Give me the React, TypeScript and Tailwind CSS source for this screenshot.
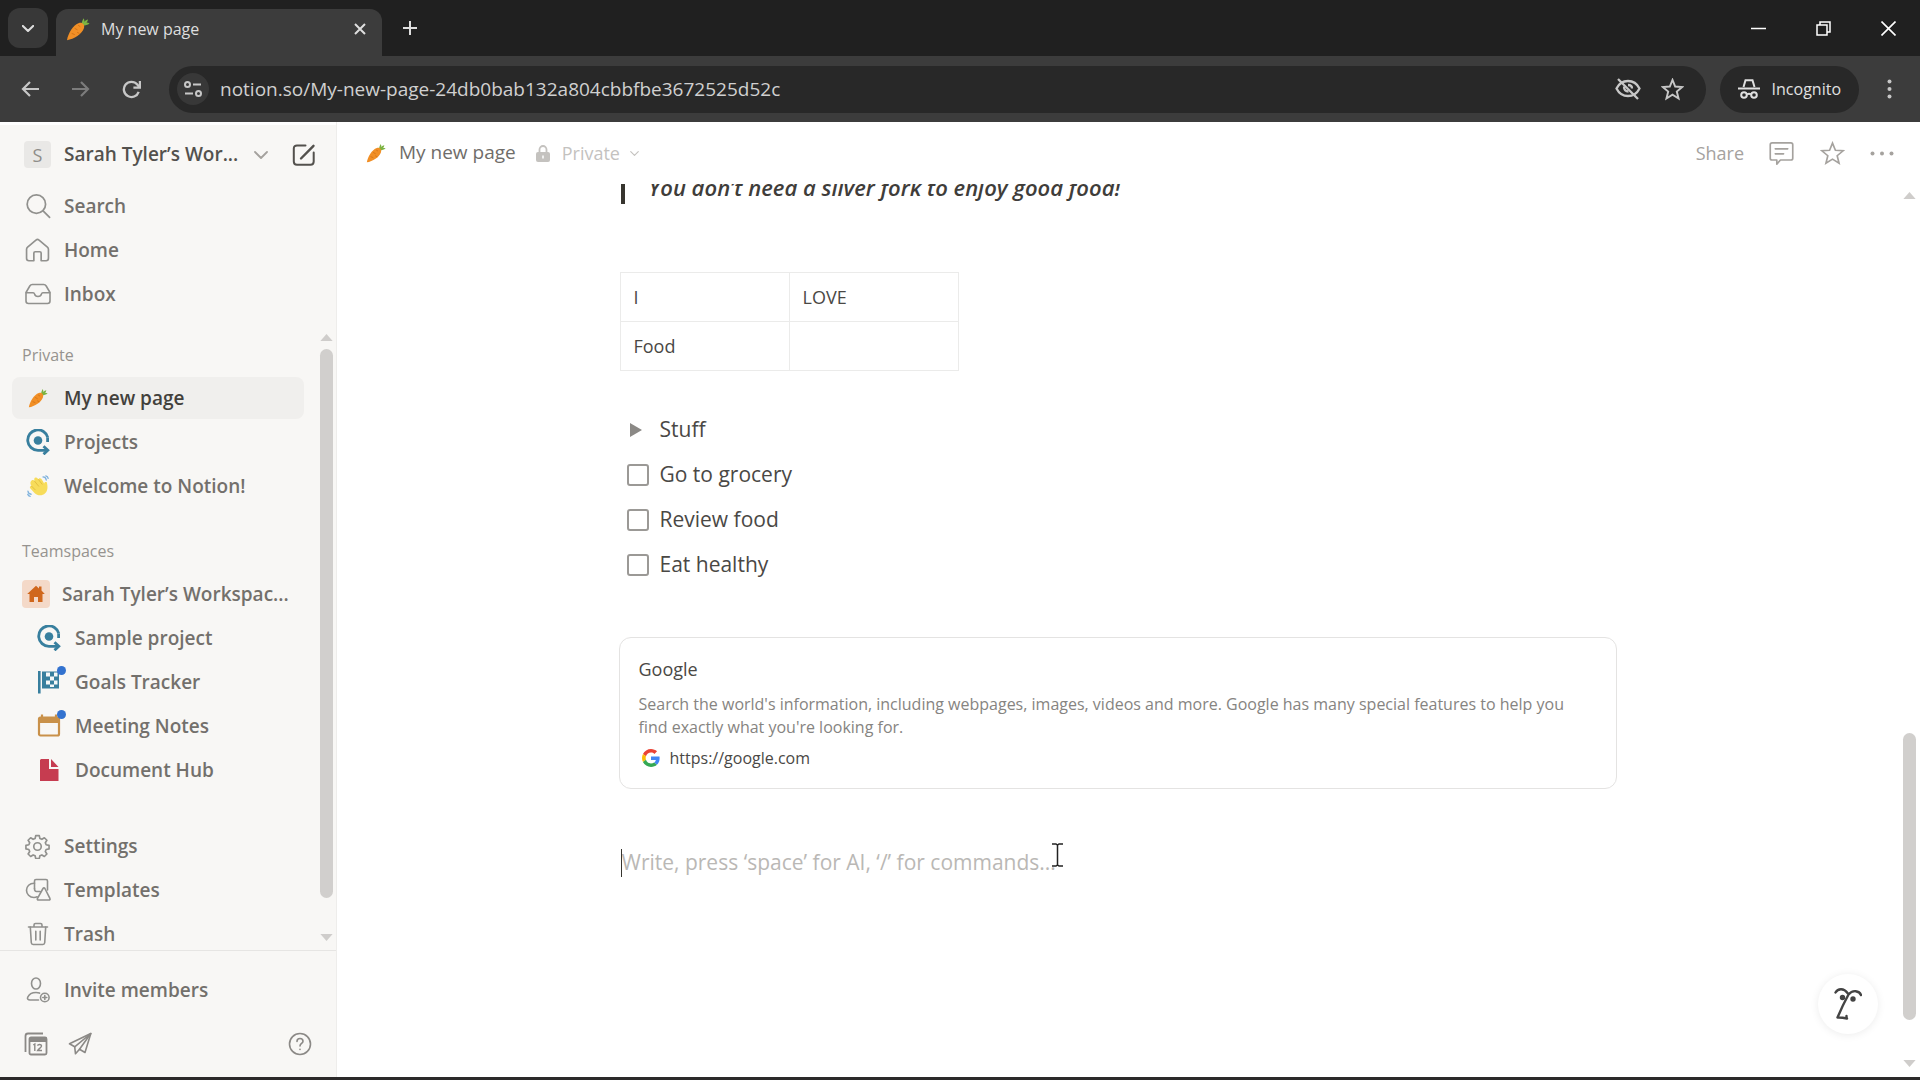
import { useState } from 'react';
import type { ReactNode } from 'react';

interface IconProps {
  className?: string;
}

interface NavItem {
  label: string;
  icon: ReactNode;
  unread?: boolean;
  active?: boolean;
}

/* ---------- Icons ---------- */

function CarrotIcon({ className = 'size-5' }: IconProps) {
  return (
    <svg viewBox="0 0 24 24" className={className} aria-hidden="true">
      <path d="M15.5 8.5c.2-2.8.6-5 2.2-7.3.6 1.3.8 2.300.7 3.500C19.500 3.500 20.600 2.900 22 2.600c-.2 1.300-.7 2.200-1.500 3 1.100 0 2.100.2 3.100.9-2 1.400-4.200 1.900-6.800 2.500z" fill="#7cb342" />
      <path d="M1 23.200C2.200 16.500 7 8 13 6c3.400-1.100 6 1.700 5 5C16.200 17 8 22 1 23.200z" fill="#f18f26" />
      <path d="M9 11.500l2.200 1.200M12.500 8.500l1.500 1M6 16.500l2.400 1M11.500 15.500l1.600.8" stroke="#d06f14" strokeWidth="0.9" fill="none" strokeLinecap="round" />
    </svg>
  );
}

function TargetIcon() {
  return (
    <svg viewBox="0 0 24 26" className="h-[26px] w-6" fill="none" stroke="#387f9e" strokeWidth="2.8" aria-hidden="true">
      <path d="M21.800 8.500A10.200 10.200 0 1 0 12 21.300h8" />
      <path d="M17.500 17.200l4.300 4.100-4.300 4" />
      <path d="M21.600 8.500v4.500" />
      <circle cx="12" cy="11.500" r="4.300" fill="#387f9e" stroke="none" />
    </svg>
  );
}

function WaveIcon() {
  return (
    <svg viewBox="0 0 24 24" className="size-[22px]" fill="none" aria-hidden="true">
      <path d="M5 6c1.500-1 2.500-.3 3.200.7C7.500 4.500 8 3 9.500 2.800c1.500-.2 2.200 1 3 2.200.3-1.500 1.800-2 3-.9 1.500 1.600 2 3.400 3.300 5.100.4-1.300 1.700-1.900 2.900-1 .9 4.200 1.300 8.600-1.900 11.800-3.400 3.300-8.600 2.700-11.600-.5L3.500 14.500c-1-1.300.2-2.900 1.500-2.300C3.500 10 3 7.500 5 6z" fill="#f7dc5a" />
      <path d="M8.200 6.700l4.500 5.500M12.500 5l4 5M5 12.200l4 4" stroke="#dfb93a" strokeWidth="0.900" strokeLinecap="round" />
      <path d="M17.500 2c2 .2 3.300 1.600 3.500 3.500M20.500 1c1.400.4 2.300 1.300 2.600 2.700M1 17.500c.2 2 1.600 3.300 3.500 3.500M.8 21c.4 1.300 1.400 2 2.700 2.200" stroke="#7fb2dd" strokeWidth="1.400" strokeLinecap="round" />
    </svg>
  );
}

function FlagIcon() {
  return (
    <svg viewBox="0 0 24 24" className="size-6" aria-hidden="true">
      <path d="M1 1h2.600v22.500H1z" fill="#387f9e" />
      <path d="M5 1.500h17v17H5z" fill="#387f9e" />
      <path d="M9 2.500h4v4H9zM13 6.500h4v4h-4zM9 10.500h4v4H9zM17 10.500h3.500v4H17zM13 14.500h4V17h-4zM17 2.500h3.500v4H17z" fill="#f5f8f8" />
    </svg>
  );
}

function MeetingIcon() {
  return (
    <svg viewBox="0 0 24 24" className="size-6" fill="none" aria-hidden="true">
      <path d="M5 .5v4M19 .5v4" stroke="#c9914a" strokeWidth="2.200" />
      <rect x="2" y="3.500" width="20" height="18" rx="1.500" stroke="#c9914a" strokeWidth="2.200" />
      <path d="M2 3h20v6H2z" fill="#c9914a" />
    </svg>
  );
}

function DocumentIcon() {
  return (
    <svg viewBox="0 0 24 24" className="size-6" fill="#c63c50" aria-hidden="true">
      <path d="M4 1h8v10h9.500v12H3V2z" />
      <path d="M14 1l7.500 8H14z" />
    </svg>
  );
}

const stroke = {
  fill: 'none',
  stroke: 'currentColor',
  strokeWidth: 1.6,
  strokeLinecap: 'round' as const,
  strokeLinejoin: 'round' as const,
  'aria-hidden': true,
};

function SearchIcon() {
  return (
    <svg viewBox="0 0 24 24" className="size-[26px]" {...stroke}>
      <circle cx="10.500" cy="10.300" r="8.500" />
      <path d="M16.700 16.500l6 6" />
    </svg>
  );
}

function HomeIcon() {
  return (
    <svg viewBox="0 0 24 24" className="size-[25px]" {...stroke}>
      <path d="M1.500 10.800c0-.9.300-1.500 1-2.100l8-6.700c.9-.7 2.100-.7 3 0l8 6.700c.7.6 1 1.200 1 2.100v8.700c0 1.500-.8 2.300-2.300 2.300h-4.700v-7.300c0-.8-.5-1.300-1.300-1.300h-4.400c-.8 0-1.300.5-1.300 1.300v7.300H3.800c-1.500 0-2.300-.8-2.300-2.300z" />
    </svg>
  );
}

function InboxIcon() {
  return (
    <svg viewBox="0 0 26 22" className="h-[22px] w-[26px]" {...stroke}>
      <path d="M1 9.500L4.800 3c.6-1 1.300-1.500 2.500-1.500h11.400c1.200 0 1.900.5 2.500 1.500L25 9.500V18c0 1.600-.9 2.500-2.500 2.500h-19C1.900 20.500 1 19.600 1 18z" />
      <path d="M1.300 9.800h6.900c.8 0 1.100.4 1.300 1.100.4 1.600 1.600 2.600 3.500 2.600s3.100-1 3.500-2.600c.2-.7.5-1.100 1.300-1.100h6.900" />
    </svg>
  );
}

function GearIcon() {
  return (
    <svg viewBox="0 0 24 24" className="size-[25px]" {...stroke}>
      <circle cx="12" cy="12" r="3.600" />
      <path d="M10.300 1.500h3.400l.6 2.800 1.900.8 2.400-1.500 2.400 2.400-1.500 2.400.8 1.900 2.800.6v3.400l-2.800.6-.8 1.900 1.500 2.400-2.400 2.400-2.400-1.500-1.900.8-.6 2.800h-3.400l-.6-2.800-1.900-.8-2.400 1.500L3 19.200l1.500-2.400-.8-1.900-2.800-.6v-3.400l2.800-.6.8-1.900L3 6l2.400-2.400 2.400 1.500 1.900-.8z" />
    </svg>
  );
}

function TemplatesIcon() {
  return (
    <svg viewBox="0 0 26 24" className="h-6 w-[26px]" {...stroke}>
      <path d="M9.500 10.500V3c0-.9.600-1.500 1.500-1.500h10c.9 0 1.500.6 1.500 1.500v9" />
      <path d="M9.500 5.200C4.500 5 1.500 8.500 1.500 12.200s3 7.300 7.500 7.300c1.200 0 2.200-.2 3.200-.7" />
      <path d="M18 10.500c.5-.9 1.400-.9 1.900 0l5 9.800c.5.900 0 1.700-1 1.700H13.500c-1 0-1.500-.8-1-1.700zM9.500 10.500c0 2 .5 3 2 3h3.500" />
    </svg>
  );
}

function TrashIcon() {
  return (
    <svg viewBox="0 0 22 24" className="h-6 w-[22px]" {...stroke}>
      <path d="M1.500 5h19M7 5V3c0-1 .6-1.500 1.500-1.500h5c.9 0 1.500.5 1.500 1.500v2" />
      <path d="M3.300 5l1 15.800c.1 1.200.8 1.700 1.800 1.700h9.800c1 0 1.700-.5 1.800-1.700l1-15.800M8.800 9.300v8.700M13.200 9.300v8.700" />
    </svg>
  );
}

function InviteIcon() {
  return (
    <svg viewBox="0 0 24 26" className="h-[26px] w-6" {...stroke}>
      <ellipse cx="10" cy="6.500" rx="4.500" ry="5.500" />
      <path d="M12.500 23H4c-2 0-3-1-2.300-2.700C3 17.300 6 15.500 10 15.500c1.500 0 2.500.2 3.500.6" />
      <circle cx="18.800" cy="20.500" r="4.300" />
      <path d="M18.800 18.500v4M16.800 20.500h4" />
    </svg>
  );
}

function CalendarStackIcon() {
  return (
    <svg viewBox="0 0 24 24" className="size-6" fill="none" stroke="currentColor" strokeWidth="1.800" aria-hidden="true">
      <path d="M1.500 20V4c0-1.700.8-2.500 2.500-2.500h15" />
      <rect x="5.500" y="5.500" width="17" height="17" rx="1.500" />
      <path d="M5.500 8h17" strokeWidth="4" />
      <path d="M9.300 13l1.500-1v7M13.500 13.700c.3-1.400 4-1.900 4 .4 0 1.600-2.800 2.500-3.900 4.400h4.400" strokeWidth="1.400" />
    </svg>
  );
}

function PlaneIcon() {
  return (
    <svg viewBox="0 0 24 24" className="size-6" {...stroke}>
      <path d="M22.800 1.500L1.500 11.800l5.200 3 .8 7 4-4.500 5.500 3.200z" />
      <path d="M6.700 14.800L22.800 1.500 11.500 17.300" />
    </svg>
  );
}

function ComposeIcon() {
  return (
    <svg viewBox="0 0 24 24" className="size-6" {...stroke} strokeWidth={2}>
      <path d="M13.500 2.500H5C3 2.500 1.800 3.700 1.800 5.500v13c0 2 1.200 3.200 3.200 3.200h13.500c2 0 3.200-1.200 3.200-3.200v-9" />
      <path d="M9 15.500L21.500 2.800" strokeWidth={2.400} />
    </svg>
  );
}

function StarIcon({ className }: IconProps) {
  return (
    <svg viewBox="0 0 24 24" className={className} {...stroke} strokeLinejoin="miter">
      <path d="M12 2l2.800 6.900 7.400.5-5.700 4.700 1.800 7.300L12 17.400l-6.300 4 1.800-7.300L1.800 9.400l7.400-.5z" />
    </svg>
  );
}

function CommentIcon() {
  return (
    <svg viewBox="0 0 24 24" className="size-[25px]" {...stroke}>
      <path d="M3 1.800h18c1 0 1.800.7 1.800 1.700v13c0 1-.8 1.700-1.800 1.700H11l-3.500 4v-4H3c-1 0-1.800-.7-1.800-1.700v-13C1.200 2.500 2 1.800 3 1.800zM6 7.500h12M6 12.300h8" />
    </svg>
  );
}

function Chevron({ className }: IconProps) {
  return (
    <svg viewBox="0 0 14 8" className={className} {...stroke} strokeWidth={1.800}>
      <path d="M1 1l6 6 6-6" />
    </svg>
  );
}

function GoogleIcon() {
  return (
    <svg viewBox="0 0 48 48" className="size-[18px]" aria-hidden="true">
      <path fill="#ea4335" d="M24 9.500c3.540 0 6.710 1.220 9.210 3.600l6.850-6.850C35.900 2.380 30.470 0 24 0 14.620 0 6.510 5.380 2.560 13.220l7.980 6.190C12.430 13.720 17.740 9.500 24 9.500z" />
      <path fill="#4285f4" d="M46.980 24.550c0-1.570-.15-3.090-.38-4.550H24v9.020h12.940c-.58 2.960-2.260 5.480-4.780 7.180l7.730 6c4.510-4.180 7.090-10.360 7.090-17.650z" />
      <path fill="#fbbc05" d="M10.530 28.590c-.48-1.450-.76-2.990-.76-4.590s.27-3.140.76-4.590l-7.980-6.190C.92 16.460 0 20.120 0 24c0 3.880.92 7.540 2.560 10.780z" />
      <path fill="#34a853" d="M24 48c6.480 0 11.930-2.130 15.890-5.810l-7.730-6c-2.150 1.450-4.920 2.300-8.160 2.300-6.260 0-11.570-4.220-13.470-9.910l-7.980 6.190C6.510 42.620 14.620 48 24 48z" />
    </svg>
  );
}

function Triangle({ className }: IconProps) {
  return (
    <svg viewBox="0 0 14 8" className={className} fill="#cfcdcb" aria-hidden="true">
      <path d="M7 0l7 8H0z" />
    </svg>
  );
}

/* ---------- Data ---------- */

const mainNav: NavItem[] = [
  { label: 'Search', icon: <SearchIcon /> },
  { label: 'Home', icon: <HomeIcon /> },
  { label: 'Inbox', icon: <InboxIcon /> },
];

const privatePages: NavItem[] = [
  { label: 'My new page', icon: <CarrotIcon />, active: true },
  { label: 'Projects', icon: <TargetIcon /> },
  { label: 'Welcome to Notion!', icon: <WaveIcon /> },
];

const teamPages: NavItem[] = [
  { label: 'Sample project', icon: <TargetIcon /> },
  { label: 'Goals Tracker', icon: <FlagIcon />, unread: true },
  { label: 'Meeting Notes', icon: <MeetingIcon />, unread: true },
  { label: 'Document Hub', icon: <DocumentIcon /> },
];

const toolNav: NavItem[] = [
  { label: 'Settings', icon: <GearIcon /> },
  { label: 'Templates', icon: <TemplatesIcon /> },
  { label: 'Trash', icon: <TrashIcon /> },
];

const todos = ['Go to grocery', 'Review food', 'Eat healthy'];

/* ---------- Browser ---------- */

function TabStrip() {
  return (
    <div className="flex h-14 shrink-0 items-end bg-[#202020] pl-2 text-[#dedede]">
      <button aria-label="Search tabs" className="mb-2 flex size-10 items-center justify-center rounded-xl bg-[#383838]">
        <Chevron className="h-[7px] w-3 stroke-[2.4]" />
      </button>
      <div className="ml-2 flex h-[47px] w-[326px] items-center rounded-t-xl bg-[#3c3c3c] pr-4 pb-2 pl-[10px]">
        <CarrotIcon className="size-6" />
        <span className="ml-[11px] flex-1 text-base">My new page</span>
        <button aria-label="Close tab">
          <svg viewBox="0 0 12 12" className="size-3" fill="none" stroke="currentColor" strokeWidth="2">
            <path d="M1 1l10 10M11 1L1 11" />
          </svg>
        </button>
      </div>
      <button aria-label="New tab" className="mb-5 ml-5 flex size-4 items-center justify-center">
        <svg viewBox="0 0 14 14" className="size-[14px]" fill="none" stroke="currentColor" strokeWidth="2">
          <path d="M7 0v14M0 7h14" />
        </svg>
      </button>
      <div className="mr-6 mb-5 ml-auto flex items-center gap-[50px] text-white">
        <button aria-label="Minimize">
          <svg viewBox="0 0 15 15" className="size-[15px]" stroke="currentColor" strokeWidth="1.500"><path d="M0 7.500h15" /></svg>
        </button>
        <button aria-label="Restore">
          <svg viewBox="0 0 15 15" className="size-[15px]" fill="none" stroke="currentColor" strokeWidth="1.500">
            <path d="M1 4h10v10H1zM4 4V1h10v10h-3" />
          </svg>
        </button>
        <button aria-label="Close">
          <svg viewBox="0 0 15 15" className="size-[15px]" stroke="currentColor" strokeWidth="1.600"><path d="M.5.5l14 14M14.500.5l-14 14" /></svg>
        </button>
      </div>
    </div>
  );
}

function Toolbar() {
  return (
    <div className="flex h-[66px] shrink-0 items-center bg-[#3c3c3c] pr-7 pl-[21px] text-[#c7c7c7]">
      <button aria-label="Back">
        <svg viewBox="0 0 18 16" className="h-4 w-[18px]" fill="none" stroke="currentColor" strokeWidth="2.200"><path d="M18 8H2M9 1L2 8l7 7" /></svg>
      </button>
      <button aria-label="Forward" className="ml-[33px] text-[#7c7c7c]">
        <svg viewBox="0 0 18 16" className="h-4 w-[18px]" fill="none" stroke="currentColor" strokeWidth="2.200"><path d="M0 8h16M9 1l7 7-7 7" /></svg>
      </button>
      <button aria-label="Reload" className="ml-8">
        <svg viewBox="0 0 18 18" className="size-[19px]" fill="none" stroke="currentColor" strokeWidth="2.200">
          <path d="M15.800 11.200A7.200 7.200 0 1 1 14.500 4.300l2 2.500" />
          <path d="M17 1v6.200h-6.200" />
        </svg>
      </button>
      <div className="ml-7 flex h-[47px] flex-1 items-center rounded-full bg-[#282828] pr-[22px] pl-2">
        <button aria-label="Site information" className="flex size-8 items-center justify-center rounded-full bg-[#383838]">
          <svg viewBox="0 0 18 16" className="h-4 w-[18px]" fill="none" stroke="currentColor" strokeWidth="2">
            <circle cx="3.500" cy="3.500" r="2.500" />
            <circle cx="14.500" cy="12.500" r="2.500" />
            <path d="M9 3.500h8M1 12.500h8" />
          </svg>
        </button>
        <input
          aria-label="Address"
          readOnly
          defaultValue="notion.so/My-new-page-24db0bab132a804cbbfbe3672525d52c"
          className="ml-[11px] min-w-0 flex-1 bg-transparent text-[19px] text-[#d0d0d0] outline-none"
        />
        <button aria-label="Third-party cookies blocked">
          <svg viewBox="0 0 26 22" className="h-[22px] w-[26px]" fill="none" stroke="currentColor" strokeWidth="2.300">
            <path d="M1.500 10.500C4 5.500 8 3 13 3s9 2.500 11.500 7.500C22 15.500 18 18 13 18S4 15.500 1.500 10.500z" />
            <path d="M9 8.500c0 3 1.500 5 4.500 5M13 7c2.500 0 4 1.500 4 3.500" />
            <path d="M3 1l20 20" />
          </svg>
        </button>
        <button aria-label="Bookmark this tab" className="ml-5">
          <StarIcon className="size-[23px] stroke-2" />
        </button>
      </div>
      <button className="ml-[14px] flex h-[47px] items-center rounded-full bg-[#282828] px-[18px] text-base text-[#e0e0e0]">
        <svg viewBox="0 0 22 20" className="mr-3 h-5 w-[22px]" fill="none" stroke="currentColor" strokeWidth="2" aria-hidden="true">
          <path d="M5.500 8l2-6.800h7l2 6.800M0 9.500h22M9 15.300c1.300-.8 2.700-.8 4 0" />
          <circle cx="6" cy="16" r="2.800" />
          <circle cx="16" cy="16" r="2.800" />
        </svg>
        Incognito
      </button>
      <button aria-label="Chrome menu" className="ml-7">
        <svg viewBox="0 0 5 20" className="h-5 w-[5px]" fill="currentColor"><circle cx="2.500" cy="2.500" r="2" /><circle cx="2.500" cy="10" r="2" /><circle cx="2.500" cy="17.500" r="2" /></svg>
      </button>
    </div>
  );
}

/* ---------- Sidebar ---------- */

function NavRow({ item, nested = false }: { item: NavItem; nested?: boolean }) {
  return (
    <a
      href="#"
      className={`my-px ml-3 flex h-[42px] w-[292px] shrink-0 items-center rounded-lg font-semibold ${nested ? 'pl-[23px]' : 'pl-3'} ${item.active ? 'bg-[#f0efed] text-[#43413c]' : 'text-[#73706c]'}`}
    >
      <span className="relative flex w-[27px] shrink-0 items-center justify-center text-[#91918e]">
        {item.icon}
        {item.unread && <span className="absolute -top-1 -right-1 size-[9px] rounded-full bg-[#3372cf]" />}
      </span>
      <span className="ml-[13px]">{item.label}</span>
    </a>
  );
}

function NavList({ items, nested }: { items: NavItem[]; nested?: boolean }) {
  return (
    <nav className="flex flex-col">
      {items.map(item => <NavRow key={item.label} item={item} nested={nested} />)}
    </nav>
  );
}

function SectionTitle({ children }: { children: ReactNode }) {
  return <h2 className="flex h-[46px] items-center pt-1 pl-[22px] text-base font-medium text-[#96938f]">{children}</h2>;
}

function Sidebar() {
  return (
    <aside className="flex w-[337px] shrink-0 flex-col border-r border-[#eeedeb] bg-[#f8f7f5] text-[19px]">
      <div className="flex h-[62px] shrink-0 items-center border-t-[3px] border-white pl-6 text-[#53514d]">
        <span className="flex size-[27px] items-center justify-center rounded bg-[#e9e8e6] text-lg font-medium text-[#8f8d89]">S</span>
        <button className="ml-[13px] flex items-center font-semibold">
          Sarah Tyler’s Wor...
          <Chevron className="ml-4 h-2 w-[14px] text-[#a5a29e]" />
        </button>
        <button aria-label="New page" className="mr-5 ml-auto">
          <ComposeIcon />
        </button>
      </div>
      <NavList items={mainNav} />

      <div className="mt-[14px] flex min-h-0 flex-1 overflow-hidden border-b border-[#e6e5e3]">
        <div className="min-w-0 flex-1">
          <SectionTitle>Private</SectionTitle>
          <NavList items={privatePages} />

          <div className="mt-[18px]">
            <SectionTitle>Teamspaces</SectionTitle>
            <a href="#" className="flex h-11 items-center pl-[22px] font-semibold text-[#73706c]">
              <span className="flex size-7 items-center justify-center rounded bg-[#f4d9c8]">
                <svg viewBox="0 0 18 18" className="size-[18px]" fill="#d0671c" aria-hidden="true">
                  <path d="M9 .8l3 2.600V1.500h2.500v4L17.800 9H15.500v8h-4.500v-5H7v5H2.500V9H.2z" />
                </svg>
              </span>
              <span className="ml-3">Sarah Tyler’s Workspac...</span>
            </a>
            <NavList items={teamPages} nested />
          </div>

          <div className="mt-8">
            <NavList items={toolNav} />
          </div>
        </div>
        <div className="flex w-4 shrink-0 flex-col items-start pt-1 pb-[9px]">
          <Triangle className="h-[7px] w-[13px]" />
          <div className="mt-2 mb-9 w-[13px] flex-1 rounded-full bg-[#d1cfcd]" />
          <Triangle className="h-[7px] w-[13px] rotate-180" />
        </div>
      </div>

      <div className="shrink-0 pt-[17px]">
        <NavList items={[{ label: 'Invite members', icon: <InviteIcon /> }]} />
        <div className="flex h-[65px] items-center pr-6 pb-px pl-6 text-[#8b8986]">
          <button aria-label="Notion Calendar"><CalendarStackIcon /></button>
          <button aria-label="Notion Mail" className="ml-5"><PlaneIcon /></button>
          <button aria-label="Help" className="ml-auto">
            <svg viewBox="0 0 24 24" className="size-6" {...stroke}>
              <circle cx="12" cy="12" r="10.500" />
              <path d="M9 9.500c0-4 6-3.800 6-.2 0 2.200-3 2.200-3 4.700M12 17.300v.2" />
            </svg>
          </button>
        </div>
      </div>
    </aside>
  );
}

/* ---------- Page ---------- */

function TopBar() {
  return (
    <header className="flex h-[62px] shrink-0 items-center pr-[26px] pl-[29px] text-lg text-[#a5a29e]">
      <a href="#" className="flex items-center text-[19px] text-[#6f6d69]">
        <CarrotIcon />
        <span className="ml-[13px]">My new page</span>
      </a>
      <button className="ml-5 flex items-center text-[#c4c2bf]">
        <svg viewBox="0 0 14 17" className="mr-3 h-[17px] w-[14px]" aria-hidden="true">
          <path d="M3.500 8V4.500a3.500 3.500 0 0 1 7 0V8" fill="none" stroke="currentColor" strokeWidth="1.800" />
          <rect y="7" width="14" height="10" rx="2" fill="currentColor" />
          <path d="M7 10.500v3" stroke="#fff" strokeWidth="1.500" />
        </svg>
        Private
        <Chevron className="ml-[10px] h-[5px] w-[9px]" />
      </button>
      <button className="ml-auto">Share</button>
      <button aria-label="Comments" className="ml-[25px]"><CommentIcon /></button>
      <button aria-label="Favorite" className="ml-[26px]"><StarIcon className="size-[25px]" /></button>
      <button aria-label="More" className="ml-[25px]">
        <svg viewBox="0 0 24 5" className="h-[5px] w-6" fill="currentColor"><circle cx="2.500" cy="2.500" r="2" /><circle cx="12" cy="2.500" r="2" /><circle cx="21.500" cy="2.500" r="2" /></svg>
      </button>
    </header>
  );
}

function Editor() {
  const [done, setDone] = useState<string[]>([]);

  const toggle = (todo: string) => {
    setDone(prev => (prev.includes(todo) ? prev.filter(t => t !== todo) : [...prev, todo]));
  };

  return (
    <div className="min-w-0 flex-1 overflow-hidden text-[21px] text-[#4a4845]">
      <div className="mx-auto w-full max-w-[998px]">
        {/* Quote, scrolled half out of view */}
        <blockquote className="-mt-[14px] ml-0.5 flex h-[34px] items-center border-l-[4px] border-[#37352f] pl-6 text-[22px] font-semibold text-[#3f3d3a] italic">
          You don’t need a silver fork to enjoy good food!
        </blockquote>

        <table className="mt-[68px] ml-px table-fixed border-collapse text-lg">
          <tbody>
            {[['I', 'LOVE'], ['Food', '']].map((row, i) => (
              <tr key={i} className="h-[49px]">
                {row.map((cell, j) => (
                  <td key={j} className="w-[169px] border border-[#ebebea] px-[13px]">{cell}</td>
                ))}
              </tr>
            ))}
          </tbody>
        </table>

        <div className="mt-9 flex h-[45px] items-center pl-[11px]">
          <button aria-label="Expand toggle" className="mr-[18px]">
            <svg viewBox="0 0 12 14" className="h-[14px] w-3" fill="#8b8986"><path d="M0 0l12 7-12 7z" /></svg>
          </button>
          Stuff
        </div>
        {todos.map(todo => (
          <label key={todo} className="flex h-[45px] items-center pl-2">
            <input
              type="checkbox"
              checked={done.includes(todo)}
              onChange={() => toggle(todo)}
              className="mr-[11px] size-[22px] appearance-none rounded-[3px] border-2 border-[#9b9996] checked:bg-[#2383e2]"
            />
            {todo}
          </label>
        ))}

        <a href="https://google.com" className="mt-[50px] block rounded-xl border border-[#e4e3e2] px-[19px] pt-[17px] pb-[18px]">
          <div className="text-lg leading-7">Google</div>
          <p className="mt-[10px] text-base leading-[23px] text-[#868481]">
            Search the world's information, including webpages, images, videos and more. Google has many special features to help you find exactly what you're looking for.
          </p>
          <div className="mt-[7px] flex h-6 items-center pl-[3px] text-base">
            <GoogleIcon />
            <span className="ml-[10px]">https://google.com</span>
          </div>
        </a>

        <div className="relative mt-[58px] ml-0.5 flex h-8 items-center">
          <span className="h-7 w-px bg-[#37352f]" />
          <input aria-label="Write" placeholder="Write, press ‘space’ for AI, ‘/’ for commands..." className="w-full outline-none placeholder:text-[#bab8b5]" />
          {/* Text cursor */}
          <svg viewBox="0 0 11 24" className="absolute -top-1 left-[431px] h-6 w-[11px]" fill="none" stroke="#222" strokeWidth="1.500" aria-hidden="true">
            <path d="M0 1h4l1.500 1L7 1h4M5.500 2v20M0 23h4l1.500-1L7 23h4" />
          </svg>
        </div>
      </div>
    </div>
  );
}

export default function App() {
  return (
    <div className="flex h-screen flex-col overflow-hidden bg-white font-['Open_Sans','Noto_Sans',sans-serif]">
      <TabStrip />
      <Toolbar />
      <div className="flex min-h-0 flex-1 border-b-[3px] border-[#2c2a2a]">
        <Sidebar />
        <main className="relative flex min-w-0 flex-1 flex-col">
          <TopBar />
          <div className="flex min-h-0 flex-1">
            <Editor />
            <div className="flex w-[22px] shrink-0 flex-col items-center pt-2 pb-[10px]">
              <Triangle className="h-[7px] w-[13px]" />
              <div className="min-h-0 flex-[535]" />
              <div className="min-h-0 w-[13px] flex-[288] rounded-full bg-[#d1cfcd]" />
              <Triangle className="mt-10 h-[7px] w-[13px] rotate-180" />
            </div>
          </div>
          <button aria-label="Notion AI" className="absolute right-[42px] bottom-[43px] flex size-[60px] items-center justify-center rounded-full bg-white shadow-[0_1px_9px_rgba(0,0,0,0.08)]">
            <svg viewBox="0 0 28 34" className="h-[34px] w-7" fill="none" stroke="#444" strokeWidth="2.400" strokeLinecap="round" strokeLinejoin="round">
              <path d="M1.500 5.500C4 1 10 1 13.500 6M27 8c-1.500-4.500-8.500-5.500-12.500-.5C11.500 13 7.500 21 3.500 30.500c3-.2 6 .2 9.500 1M12.500 31v-2" />
              <circle cx="8.500" cy="10.500" r="1.500" fill="#444" />
              <circle cx="19" cy="12" r="1.500" fill="#444" />
            </svg>
          </button>
        </main>
      </div>
    </div>
  );
}
